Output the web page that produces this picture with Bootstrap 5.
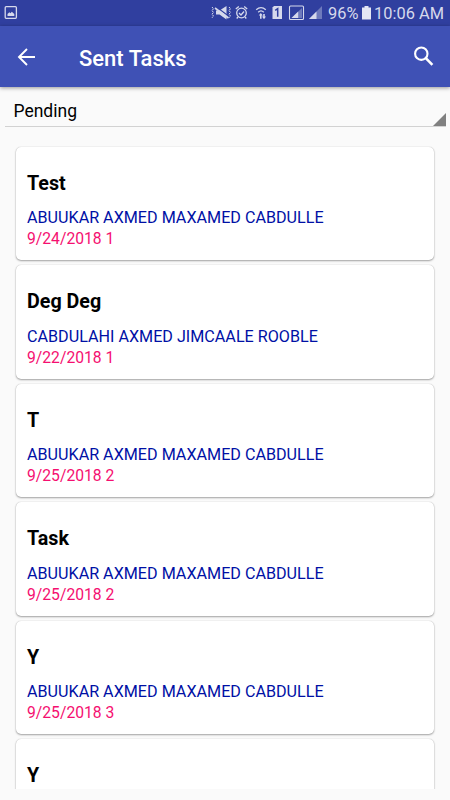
<!DOCTYPE html>
<html lang="en">
<head>
<meta charset="utf-8">
<meta name="viewport" content="width=device-width, initial-scale=1">
<title>Sent Tasks</title>
<link rel="stylesheet" href="https://cdn.jsdelivr.net/npm/bootstrap@5.3.0/dist/css/bootstrap.min.css">
<style>
body{font-family:Roboto,"Liberation Sans",sans-serif;background:#fafafa;color:#000;height:800px;line-height:1}
.status{height:26px;background:#303f9f;color:#d6d9ec;font-size:16.4px;padding:0 6px 0 0}
.status svg{height:26px;width:325px}
.clock{white-space:nowrap;padding-left:3px}
.pct,.time{padding-top:3px}
.appbar{height:61px;background:#3f51b5;box-shadow:0 1px 4px rgba(0,0,0,.4);padding:0 15px 0 17px;z-index:1}
.appbar h1{font-size:22px;font-weight:500;margin-left:42px;line-height:26px;padding-top:4px}
.spinner{height:39.5px;margin:0 4px 0 5px;border-bottom:1px solid #d2d2d2;padding:0 0 0 8.5px;font-size:17.5px}
.spinner span{padding-top:11px}
.spinner svg{width:13px;height:13px}
.tasks{height:662.5px;padding:20.5px 16px 0;overflow:hidden}
.task{height:113.4px;margin-bottom:5px;border:0;border-radius:5px;padding:26px 11px 0;box-shadow:0 1px 2px rgba(0,0,0,.34),0 0 1px rgba(0,0,0,.25);flex:none;color:#000}
.task h2{font-size:19.7px;font-weight:700;line-height:22px;margin:0 0 12.4px}
.who{color:#0010a5;font-size:16.15px;line-height:21px}
.when{color:#f50f70;font-size:15.7px;line-height:22.8px}
</style>
<script src="https://cdn.jsdelivr.net/npm/bootstrap@5.3.0/dist/js/bootstrap.bundle.min.js"></script>
</head>
<body class="d-flex flex-column overflow-hidden m-0">
<div class="status d-flex align-items-center flex-shrink-0">
<svg class="flex-shrink-0" viewBox="0 0 325 26" fill="#d6d9ec" stroke="none">
<rect x="5.2" y="6.7" width="11.2" height="11.6" rx="1" fill="none" stroke="#d6d9ec" stroke-width="1.3"/>
<path d="M7.5 16v-2l1.8-1.7 1.2 1 1.3-1.5 2.5 2.3V16z"/>
<path d="M216 10.5h3.5l7-4.5v13.5l-7-5H216z"/>
<path d="M215.5 8.2 228 17.7" fill="none" stroke="#303f9f" stroke-width="1.2" transform="translate(1 -1.2)"/>
<path d="M215 8 228.5 18" fill="none" stroke="#d6d9ec" stroke-width="1.6"/>
<path d="m212 7 1.5 1.8-1.5 1.8 1.5 1.8-1.5 1.8 1.5 1.8-1.5 1.8M229 7l1.5 1.8-1.5 1.8 1.5 1.8-1.5 1.8 1.5 1.8-1.5 1.8" fill="none" stroke="#d6d9ec" stroke-width="1" stroke-dasharray="2 .6"/>
<g fill="none" stroke="#d6d9ec" stroke-width="1.3"><circle cx="241.5" cy="13" r="4.8"/><path d="m235.8 9 3-2.5m5.4 0 3 2.5M239 13l2 2 3-3.5M238 17l-1.3 1.5m8.3-1.5 1.3 1.5"/>
<path d="M256.2 9.8q4.8-4.3 9.6 0M258.2 12.2q2.8-2.6 5.6 0"/></g>
<path d="m260.8 13 2 2.6h-1.2v3.2H260v-3.2h-1.2z"/><path d="M263.2 14h1.6v2.6h1.2l-2 2.6-2-2.6h1.2z"/>
<path d="M272.5 7.5 274 6h8v13h-9.5z"/><path d="M275.2 10.3 277.7 8.7v8" fill="none" stroke="#303f9f" stroke-width="1.5"/>
<rect x="289.5" y="6" width="14" height="13.5" rx="1" fill="none" stroke="#d6d9ec" stroke-width="1.1"/>
<path d="M302 8v10h-10.5z" opacity=".38"/><path d="M298.2 11.6V18h-6.7z"/>
<path d="M322 6v13h-13z" opacity=".38"/><path d="M316.5 11.5V19H309z"/>
</svg>
<span class="clock d-flex align-items-center flex-grow-1"><span class="pct">96%</span><svg style="width:9px;height:14px" class="ms-1" viewBox="0 0 9 14" fill="#e4e6f4"><path d="M2.5 0h4v1.5H9V13.5H0V1.5h2.5z"/></svg><span class="ms-auto time">10:06 AM</span></span>
</div>
<nav class="appbar d-flex align-items-center flex-shrink-0 text-white position-relative">
<svg width="20" height="20" viewBox="0 0 20 20" fill="none" stroke="#fff" stroke-width="1.9"><path d="M18 10H2.5M10 2 2 10l8 8"/></svg>
<h1 class="mb-0">Sent Tasks</h1>
<svg class="ms-auto" width="22" height="22" viewBox="0 0 22 22" fill="none" stroke="#fff" stroke-width="2.1"><circle cx="8.3" cy="7.7" r="6.2"/><path d="m12.8 12.2 6.6 6.6" stroke-width="2.6"/></svg>
</nav>
<div class="spinner d-flex align-items-center justify-content-between flex-shrink-0"><span>Pending</span><svg class="align-self-end" viewBox="0 0 13 13"><path d="M13 0v13H0z" fill="#808080"/></svg></div>
<main class="tasks d-flex flex-column flex-shrink-0">
<article class="task card"><h2>Test</h2><div class="who">ABUUKAR AXMED MAXAMED CABDULLE</div><div class="when">9/24/2018 1</div></article>
<article class="task card"><h2>Deg Deg</h2><div class="who">CABDULAHI AXMED JIMCAALE ROOBLE</div><div class="when">9/22/2018 1</div></article>
<article class="task card"><h2>T</h2><div class="who">ABUUKAR AXMED MAXAMED CABDULLE</div><div class="when">9/25/2018 2</div></article>
<article class="task card"><h2>Task</h2><div class="who">ABUUKAR AXMED MAXAMED CABDULLE</div><div class="when">9/25/2018 2</div></article>
<article class="task card"><h2>Y</h2><div class="who">ABUUKAR AXMED MAXAMED CABDULLE</div><div class="when">9/25/2018 3</div></article>
<article class="task card"><h2>Y</h2></article>
</main>
</body>
</html>
